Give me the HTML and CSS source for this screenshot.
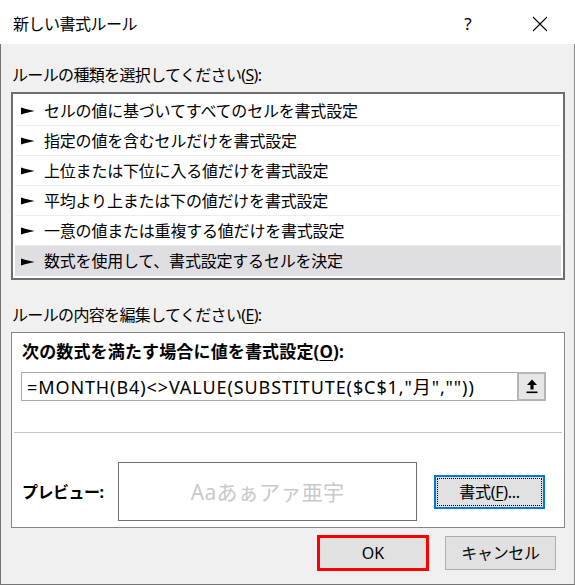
FILE: index.html
```html
<!DOCTYPE html>
<html lang="ja">
<head>
<meta charset="utf-8">
<title>新しい書式ルール</title>
<link rel="stylesheet" href="styles.css">
</head>
<body>
<div class="window">
  <div class="titlebar">
    <span class="title">新しい書式ルール</span>
    <span class="help">?</span>
    <span class="close">
      <svg width="16" height="16" viewBox="0 0 16 16"><path d="M1 1 L15 15 M15 1 L1 15" stroke="#000" stroke-width="1.1" fill="none"/></svg>
    </span>
  </div>
  <div class="content">
    <div class="label label-type">ルールの種類を選択してください(<u>S</u>):</div>
    <ul class="rule-list">
      <li class="rule"><svg class="pointer" width="14" height="8" viewBox="0 0 14 8"><polygon points="0,0.5 4,1.8 13.5,4 4,6.2 0,7.5" fill="#000"/></svg><span>セルの値に基づいてすべてのセルを書式設定</span></li>
      <li class="rule"><svg class="pointer" width="14" height="8" viewBox="0 0 14 8"><polygon points="0,0.5 4,1.8 13.5,4 4,6.2 0,7.5" fill="#000"/></svg><span>指定の値を含むセルだけを書式設定</span></li>
      <li class="rule"><svg class="pointer" width="14" height="8" viewBox="0 0 14 8"><polygon points="0,0.5 4,1.8 13.5,4 4,6.2 0,7.5" fill="#000"/></svg><span>上位または下位に入る値だけを書式設定</span></li>
      <li class="rule"><svg class="pointer" width="14" height="8" viewBox="0 0 14 8"><polygon points="0,0.5 4,1.8 13.5,4 4,6.2 0,7.5" fill="#000"/></svg><span>平均より上または下の値だけを書式設定</span></li>
      <li class="rule"><svg class="pointer" width="14" height="8" viewBox="0 0 14 8"><polygon points="0,0.5 4,1.8 13.5,4 4,6.2 0,7.5" fill="#000"/></svg><span>一意の値または重複する値だけを書式設定</span></li>
      <li class="rule selected"><svg class="pointer" width="14" height="8" viewBox="0 0 14 8"><polygon points="0,0.5 4,1.8 13.5,4 4,6.2 0,7.5" fill="#000"/></svg><span>数式を使用して、書式設定するセルを決定</span></li>
    </ul>
    <div class="label label-edit">ルールの内容を編集してください(<u>E</u>):</div>
    <div class="panel">
      <div class="bold-label">次の数式を満たす場合に値を書式設定(<u>O</u>):</div>
      <div class="formula-box">
        <span class="formula">=MONTH(B4)&lt;&gt;VALUE(SUBSTITUTE($C$1,"月",""))</span>
        <span class="collapse-btn">
          <svg width="12" height="15" viewBox="0 0 12 15"><polygon points="6,0.5 11,6 7.6,6 7.6,10.5 4.4,10.5 4.4,6 1,6" fill="#000"/><rect x="0.5" y="12.5" width="11" height="1.6" fill="#000"/></svg>
        </span>
      </div>
      <div class="separator"></div>
      <div class="preview-row">
        <span class="preview-label">プレビュー:</span>
        <div class="preview-box">Aaあぁアァ亜宇</div>
        <button class="btn btn-format"><span class="focus">書式(<u>F</u>)...</span></button>
      </div>
    </div>
    <div class="footer">
      <button class="btn btn-ok">OK</button>
      <button class="btn btn-cancel">キャンセル</button>
    </div>
  </div>
</div>
</body>
</html>
```

FILE: styles.css
```css
* {
  box-sizing: border-box;
}

html, body {
  margin: 0;
  padding: 0;
  background: #ffffff;
}

body {
  font-family: "Noto Sans", "Noto Sans CJK JP", sans-serif;
  font-size: 16px;
  color: #000;
}

.window {
  width: 575px;
  height: 585px;
  display: flex;
  flex-direction: column;
}

.titlebar {
  height: 44px;
  background: #ffffff;
  display: flex;
  align-items: center;
  padding: 3px 0 0 13px;
}

.title {
  flex: 1;
  font-size: 16px;
  line-height: 20px;
  letter-spacing: -0.5px;
}

.help {
  width: 20px;
  text-align: center;
  font-size: 17px;
  line-height: 20px;
  margin-right: 54px;
}

.close {
  width: 16px;
  height: 16px;
  display: flex;
  margin-right: 27px;
}

.content {
  flex: 1;
  background: #f0f0f0;
  border-left: 1px solid #747474;
  border-right: 1px solid #8a8a8a;
  border-bottom: 1px solid #747474;
  padding: 21px 9px 0 10px;
  display: flex;
  flex-direction: column;
}

.label {
  line-height: 20px;
  padding-left: 1px;
  letter-spacing: -0.65px;
}

.label u {
  text-underline-offset: 2px;
}

.rule-list {
  list-style: none;
  margin: 7px 0 0;
  padding: 2px;
  border: 2px solid #6e6e6e;
  background: #ffffff;
}

.rule {
  height: 30px;
  display: flex;
  align-items: center;
  padding-left: 6px;
  border-bottom: 1px solid #ececec;
  letter-spacing: -0.2px;
  line-height: 20px;
}

.rule.selected {
  background: #dfdee3;
  border-bottom: none;
}

.pointer {
  flex: none;
  margin-right: 9px;
  margin-top: 1px;
}

.label-edit {
  margin-top: 25px;
}

.panel {
  margin-top: 7px;
  border: 1px solid #858585;
  background: #ffffff;
  padding: 9px 0 6px;
  display: flex;
  flex-direction: column;
}

.bold-label {
  font-weight: bold;
  font-size: 17px;
  line-height: 20px;
  padding-left: 10px;
  letter-spacing: 0.15px;
}

.bold-label u {
  text-underline-offset: 2px;
}

.formula-box {
  margin: 10px 0 0 9px;
  width: 525px;
  height: 29px;
  border: 1px solid #ababab;
  display: flex;
  align-items: center;
}

.formula {
  flex: 1;
  padding-left: 5px;
  font-size: 18px;
  line-height: 20px;
  letter-spacing: 0.9px;
  white-space: nowrap;
}

.collapse-btn {
  width: 29px;
  height: 29px;
  margin: -1px -1px -1px 0;
  border: 2px solid #b5b5b5;
  background: #e6e6e6;
  display: flex;
  align-items: center;
  justify-content: center;
}

.separator {
  margin: 31px 2px 0 2px;
  height: 1px;
  background: #c8c8c8;
}

.preview-row {
  margin-top: 29px;
  display: flex;
  align-items: center;
}

.preview-label {
  width: 106px;
  padding-left: 10px;
  font-weight: bold;
  line-height: 20px;
  letter-spacing: -0.5px;
}

.preview-box {
  width: 299px;
  height: 59px;
  border: 1px solid #707070;
  display: flex;
  align-items: center;
  justify-content: center;
  color: #c9c9c9;
  font-size: 21px;
  letter-spacing: 0.3px;
  padding-bottom: 1px;
}

.btn {
  font-family: "Noto Sans", "Noto Sans CJK JP", sans-serif;
  font-size: 16px;
  color: #000;
  background: #e1e1e1;
  border: 1px solid #adadad;
  padding: 0;
  margin: 0;
  line-height: 20px;
}

.btn u {
  text-underline-offset: 2px;
}

.btn-format {
  margin-left: 17px;
  width: 111px;
  height: 34px;
  border: 2px solid #0078d7;
  padding: 1px;
  display: flex;
}

.focus {
  flex: 1;
  border: 1px dotted #000;
  display: flex;
  align-items: center;
  justify-content: center;
  letter-spacing: -0.3px;
}

.footer {
  margin-top: 7px;
  padding-right: 9px;
  display: flex;
  justify-content: flex-end;
  align-items: center;
  gap: 16px;
}

.btn-ok {
  width: 112px;
  height: 36px;
  border: 3px solid #ff0000;
}

.btn-cancel {
  width: 111px;
  height: 34px;
  letter-spacing: -0.3px;
}
```
